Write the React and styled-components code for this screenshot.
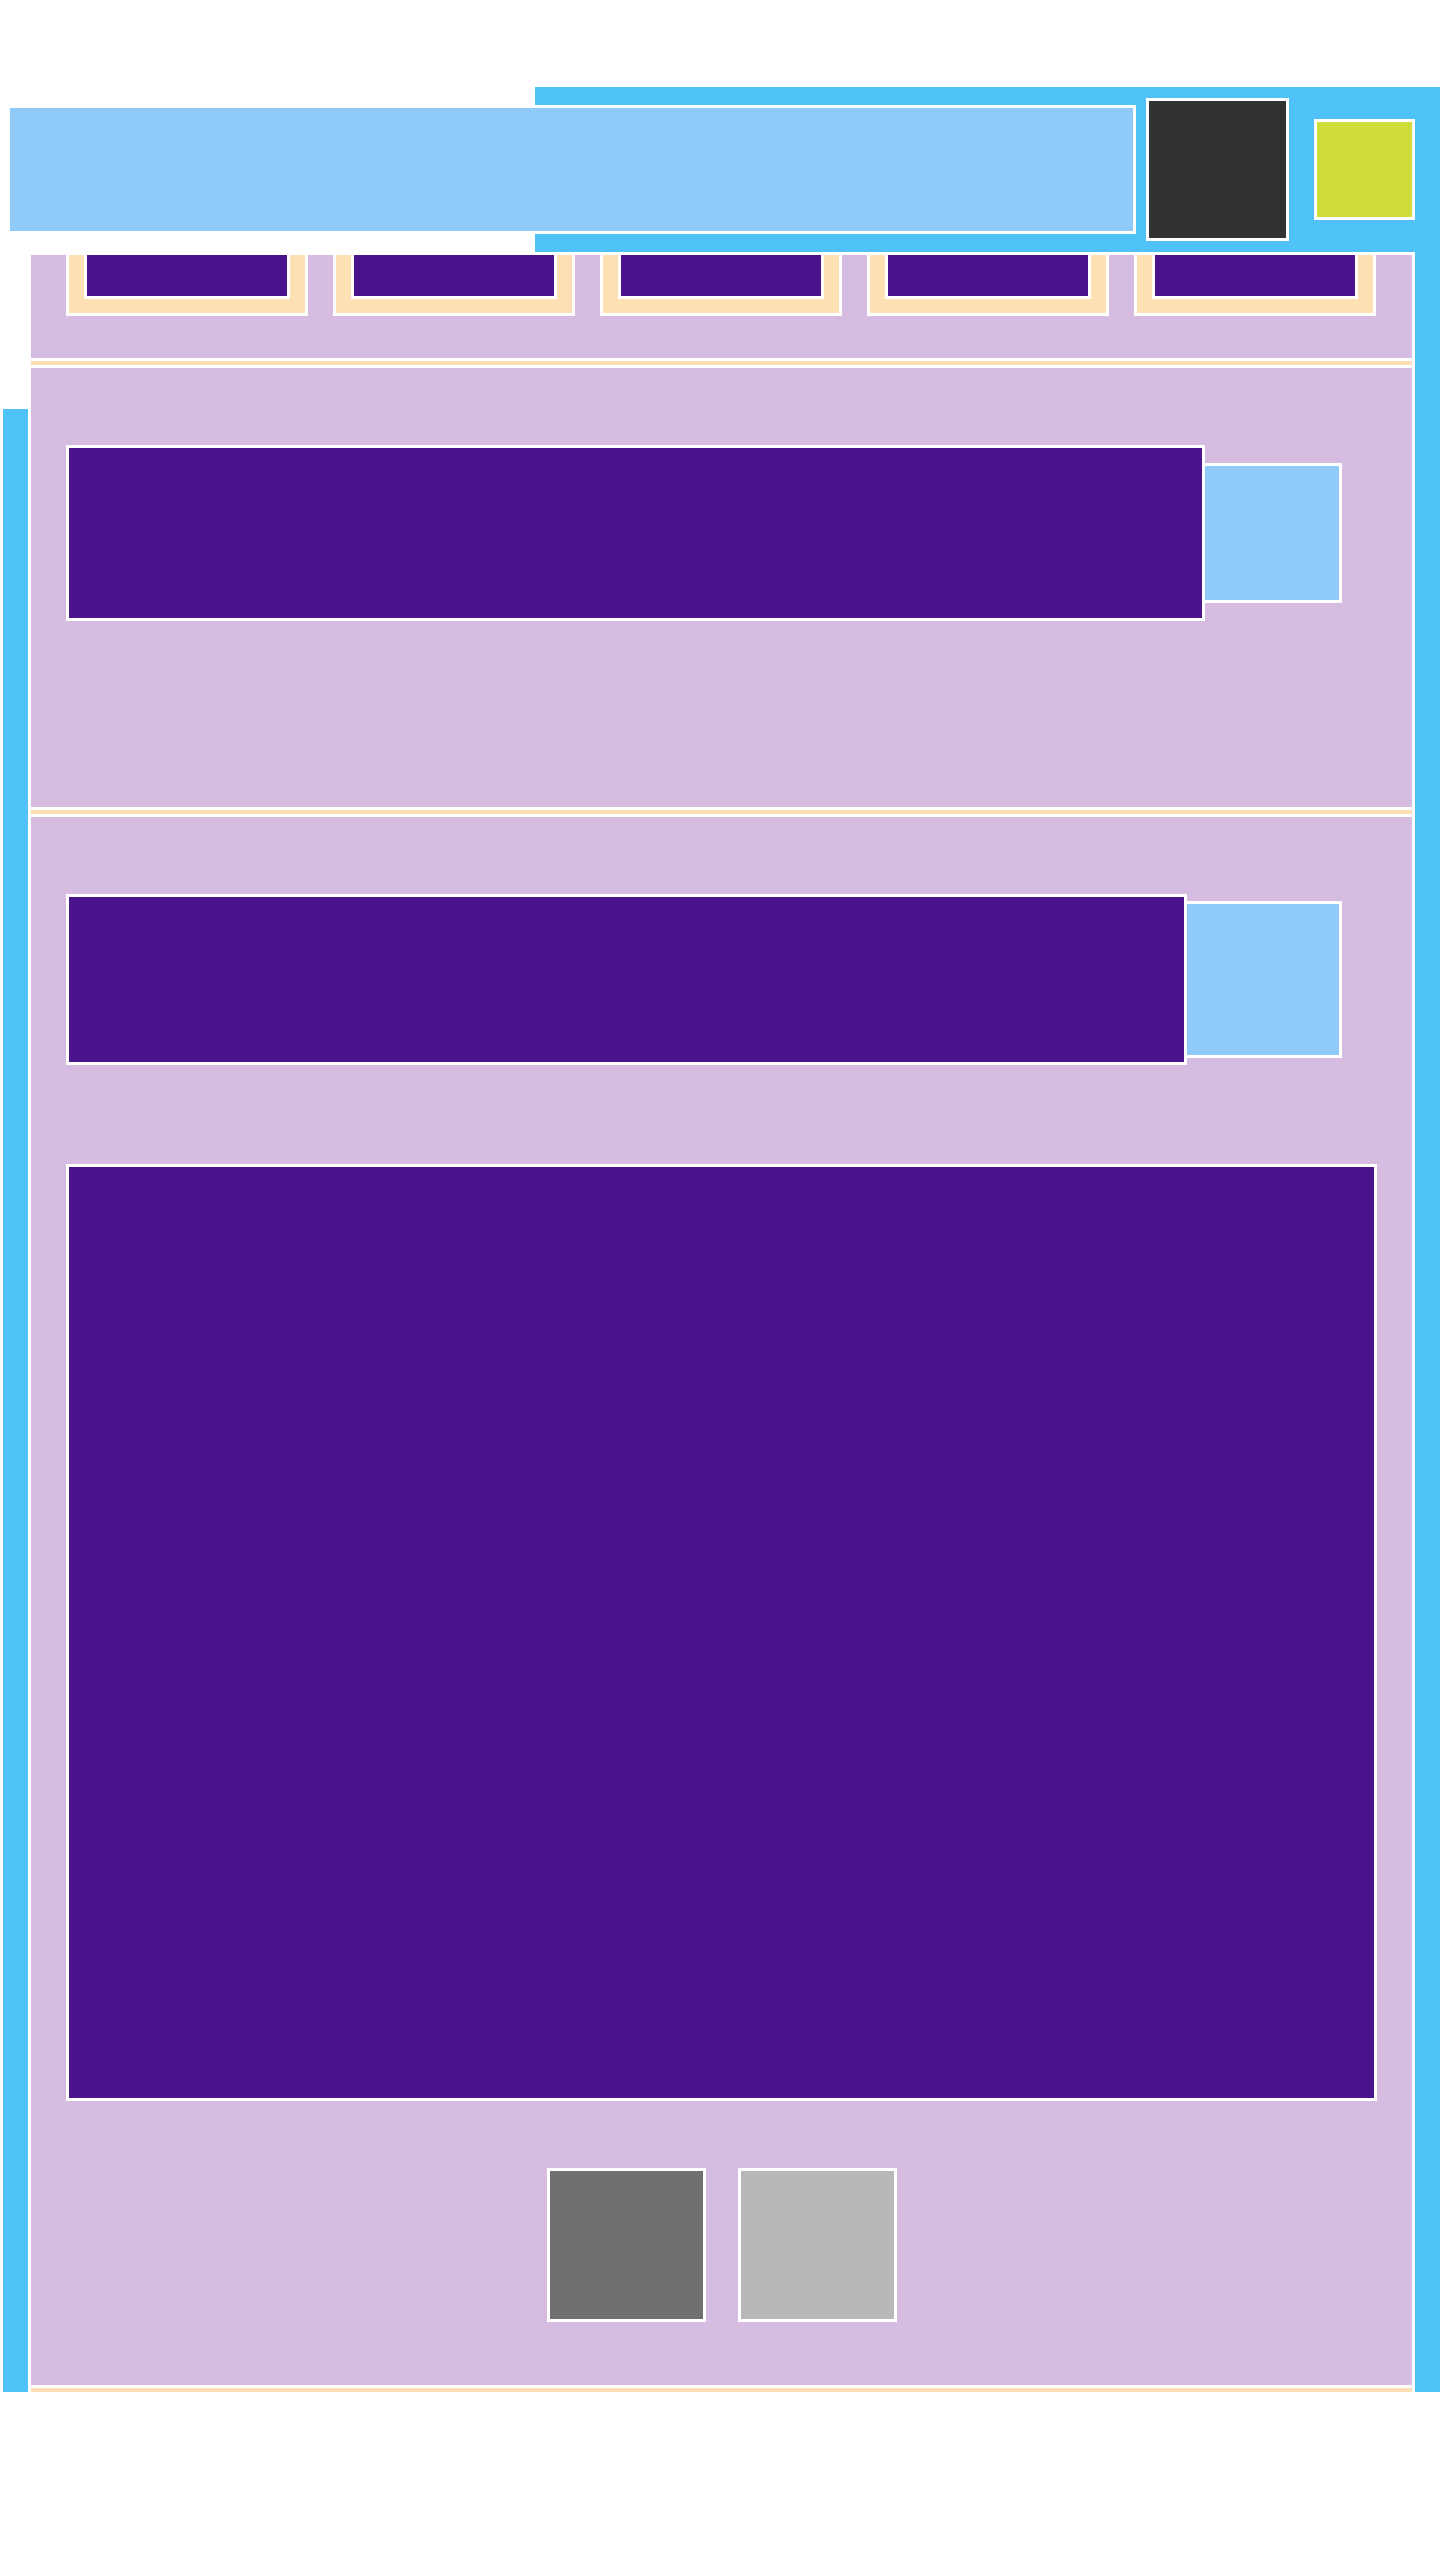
import React from 'react';
import styled, { createGlobalStyle } from 'styled-components';

const cyan = '#4fc3f7';
const sky = '#90caf9';
const lilac = '#d7bce1';
const plum = '#4a148c';
const peach = '#fde0b3';
const ink = '#323232';
const lime = '#cfdd3a';
const slate = '#707070';
const ash = '#b8b8b8';
const white = '#ffffff';

const GlobalStyle = createGlobalStyle`
  *, *::before, *::after { box-sizing: border-box; }
  html, body { margin: 0; padding: 0; background: ${white}; }
  body { font-family: "Liberation Sans", Arial, sans-serif; }
  button { font: inherit; cursor: pointer; }
`;

const Page = styled.div`
  width: 1440px;
  min-height: 2560px;
  padding-top: 87px;
  background: ${white};
`;

const Header = styled.header`
  display: flex;
  align-items: center;
  height: 165px;
  padding: 0 25px 0 7px;
  background: linear-gradient(90deg, ${white} 0 535px, ${cyan} 535px 100%);
`;

const SearchField = styled.div`
  flex: none;
  width: 1129px;
  height: 129px;
  background: ${sky};
  border: 3px solid ${white};
`;

const HeaderButton = styled.button`
  flex: none;
  width: ${(p) => p.$size}px;
  height: ${(p) => p.$size}px;
  margin-left: ${(p) => p.$gap}px;
  padding: 0;
  background: ${(p) => p.$color};
  border: 3px solid ${white};
`;

const Body = styled.div`
  padding: 0 25px 0 28px;
  background:
    linear-gradient(${cyan}, ${cyan}) right top / 25px 100% no-repeat,
    linear-gradient(${cyan}, ${cyan}) 3px 157px / 25px calc(100% - 157px) no-repeat,
    ${white};
`;

const Column = styled.main`
  display: flex;
  flex-direction: column;
  background: ${peach};
  border-left: 3px solid ${white};
  border-right: 3px solid ${white};
`;

const Section = styled.section`
  background: ${lilac};
  border-top: 3px solid ${white};
  border-bottom: 3px solid ${white};
  margin-bottom: 4px;
  padding: ${(p) => p.$pad};
`;

const Nav = styled(Section)`
  display: flex;
  justify-content: flex-start;
  gap: 25px;
`;

const Tab = styled.div`
  flex: none;
  width: 242px;
  padding: 0 15px 14px;
  background: ${peach};
  border: 3px solid ${white};
  border-top: 0;
`;

const TabFace = styled.div`
  height: 44px;
  background: ${plum};
  border: 3px solid ${white};
  border-top: 0;
`;

const SearchRow = styled.div`
  display: flex;
  align-items: center;
`;

const QueryBox = styled.div`
  flex: none;
  width: ${(p) => p.$w}px;
  height: ${(p) => p.$h}px;
  background: ${plum};
  border: 3px solid ${white};
`;

const GoButton = styled.button`
  flex: none;
  width: ${(p) => p.$w}px;
  height: ${(p) => p.$h}px;
  padding: 0;
  background: ${sky};
  border: 3px solid ${white};
  border-left: 0;
`;

const Stack = styled.div`
  display: flex;
  flex-direction: column;
`;

const Panel = styled.div`
  height: 937px;
  margin-top: 99px;
  background: ${plum};
  border: 3px solid ${white};
`;

const Actions = styled.div`
  display: flex;
  justify-content: center;
  gap: 32px;
  margin-top: 67px;
`;

const ActionButton = styled.button`
  width: 159px;
  height: 154px;
  padding: 0;
  background: ${(p) => p.$color};
  border: 3px solid ${white};
`;

export default function App() {
  const tabs = [1, 2, 3, 4, 5];
  return (
    <>
      <GlobalStyle />
      <Page>
        <Header>
          <SearchField />
          <HeaderButton $size={143} $gap={10} $color={ink} aria-label="menu" />
          <HeaderButton $size={101} $gap={25} $color={lime} aria-label="profile" />
        </Header>
        <Body>
          <Column>
            <Nav $pad="0 35px 42px">
              {tabs.map((t) => (
                <Tab key={t}>
                  <TabFace />
                </Tab>
              ))}
            </Nav>
            <Section $pad="77px 35px 186px">
              <SearchRow>
                <QueryBox $w={1139} $h={176} />
                <GoButton $w={137} $h={140} aria-label="go" />
              </SearchRow>
            </Section>
            <Section $pad="77px 35px 63px">
              <Stack>
                <SearchRow>
                  <QueryBox $w={1121} $h={171} />
                  <GoButton $w={155} $h={157} aria-label="send" />
                </SearchRow>
                <Panel />
                <Actions>
                  <ActionButton $color={slate} aria-label="cancel" />
                  <ActionButton $color={ash} aria-label="reset" />
                </Actions>
              </Stack>
            </Section>
          </Column>
        </Body>
      </Page>
    </>
  );
}
